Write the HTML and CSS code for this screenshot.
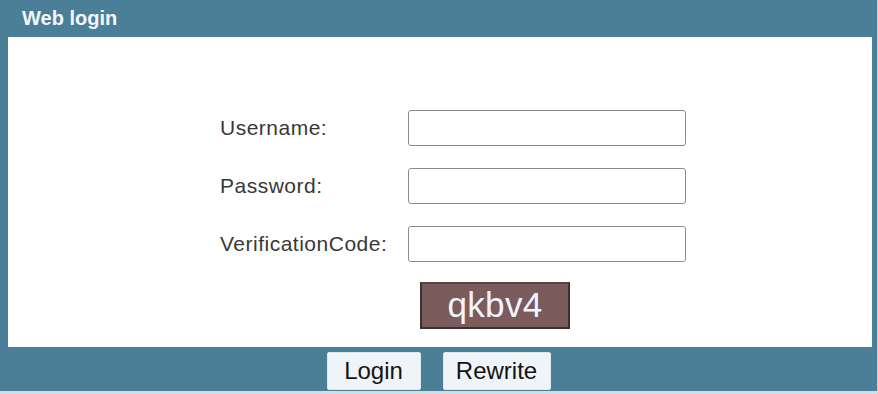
FILE: index.html
```html
<!DOCTYPE html>
<html>
<head>
<meta charset="utf-8">
<link rel="stylesheet" href="styles.css">
</head>
<body>
<div class="frame">
  <div class="head">Web login</div>
  <div class="content">
    <div class="form">
      <label class="lbl">Username:</label>
      <input class="field" type="text">
      <label class="lbl">Password:</label>
      <input class="field" type="password">
      <label class="lbl">VerificationCode:</label>
      <input class="field" type="text">
      <div></div>
      <div class="captcha">qkbv4</div>
    </div>
  </div>
  <div class="foot">
    <button class="btn btn-login">Login</button>
    <button class="btn btn-rewrite">Rewrite</button>
  </div>
  <div class="edge"></div>
</div>
</body>
</html>
```
FILE: styles.css
```css
html, body {
  margin: 0;
  padding: 0;
  background: #ffffff;
}
.frame {
  width: 878px;
  height: 394px;
  background: #4b7f98;
  display: flex;
  flex-direction: column;
  font-family: "Liberation Sans", Arial, sans-serif;
  box-sizing: border-box;
  border-right: 1px solid #c9d3d8;
}
.head {
  height: 37px;
  box-sizing: border-box;
  padding: 6px 0 0 22px;
  color: #f4f7f9;
  font-weight: bold;
  font-size: 20px;
  line-height: 25px;
}
.content {
  height: 310px;
  margin: 0 5px 0 8px;
  background: #ffffff;
  box-sizing: border-box;
  padding: 73px 0 0 212px;
}
.form {
  display: grid;
  grid-template-columns: 188px 278px;
  grid-auto-rows: auto;
  row-gap: 22px;
  align-items: center;
}
.lbl {
  font-size: 21px;
  color: #383838;
  letter-spacing: 0.5px;
}
.field {
  width: 278px;
  height: 36px;
  box-sizing: border-box;
  border: 1px solid #8c8c8c;
  border-radius: 3px;
  margin: 0;
  background: #ffffff;
}
.captcha {
  width: 150px;
  height: 47px;
  box-sizing: border-box;
  margin: -2px 0 0 12px;
  background: #7c5b5d;
  border: 2px solid #3e3031;
  border-top-color: #5a4446;
  color: #f6f4f4;
  font-size: 35px;
  line-height: 42px;
  text-align: center;
  letter-spacing: 0.3px;
  text-shadow: 1px 0 1px rgba(60, 110, 140, 0.6);
}
.foot {
  height: 44px;
  display: flex;
  justify-content: center;
  align-items: flex-start;
  gap: 22px;
  padding-top: 5px;
  box-sizing: border-box;
}
.btn {
  height: 38px;
  margin: 0;
  padding: 0;
  border: 1px solid #dfe7ec;
  border-radius: 2px;
  background: #eef4f8;
  color: #141414;
  font-family: "Liberation Sans", Arial, sans-serif;
  font-size: 24px;
}
.btn-login {
  width: 94px;
}
.btn-rewrite {
  width: 108px;
}
.edge {
  height: 3px;
  background: #d6dde1;
}
```
